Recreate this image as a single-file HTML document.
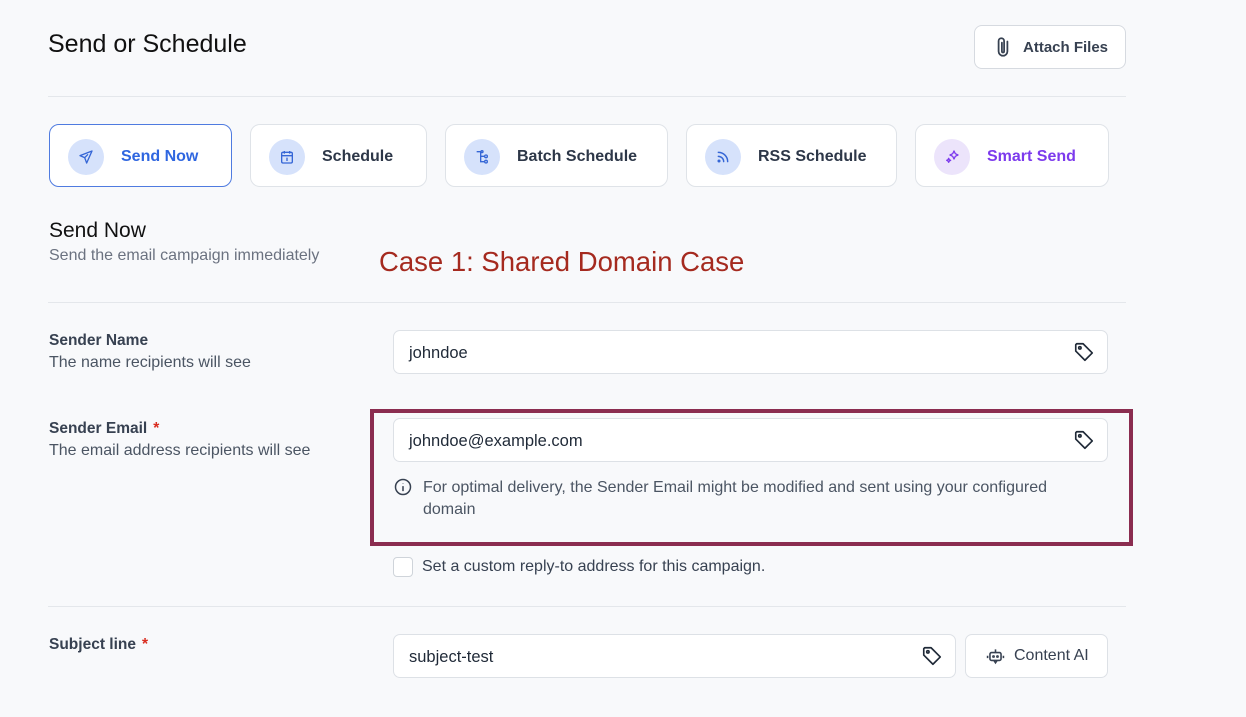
<!DOCTYPE html>
<html><head><meta charset="utf-8"><style>
*{box-sizing:border-box;margin:0;padding:0}
body{width:1246px;height:717px;background:#f8f9fb;font-family:"Liberation Sans",sans-serif;color:#1f2937;position:relative;overflow:hidden}
.a{position:absolute}
.card{position:absolute;top:124px;height:63px;background:#fff;border:1px solid #dfe3e8;border-radius:10px;display:flex;align-items:center;font-size:16px;font-weight:bold;color:#2d3748;padding-top:2px}
.ic{width:36px;height:36px;border-radius:50%;background:#d6e2fb;margin-left:18px;margin-right:17px;display:flex;align-items:center;justify-content:center}
.hr{position:absolute;left:48px;width:1078px;height:1px;background:#e4e7eb}
.inp{position:absolute;left:393px;width:715px;height:44px;background:#fff;border:1px solid #dde1e6;border-radius:7px;font-size:16.5px;color:#1f2937;padding:2px 0 0 15px;display:flex;align-items:center}
.tag{position:absolute;right:12px;top:10px}
.lbl{position:absolute;left:49px;font-size:15.5px;font-weight:bold;color:#374151}
.sub{position:absolute;left:49px;font-size:16px;color:#4b5563}
.req{color:#d92d20;margin-left:6px}
</style></head><body>
<div class="a" style="left:48px;top:30px;font-size:25px;color:#111">Send or Schedule</div>
<div class="a" style="left:974px;top:25px;width:152px;height:44px;background:#fff;border:1px solid #d6dae0;border-radius:8px;display:flex;align-items:center;font-size:15px;font-weight:bold;color:#374151">
<svg style="margin:0 11px 0 19px" width="18" height="22" viewBox="0 0 16 20" fill="none" stroke="#374151" stroke-width="1.6" stroke-linecap="round"><path d="M12 5v9a4 4 0 0 1-8 0V4.5a2.5 2.5 0 0 1 5 0V14a1 1 0 0 1-2 0V6"/></svg>Attach Files</div>
<div class="hr" style="top:96px"></div>

<div class="card" style="left:49px;width:183px;border:1.5px solid #4f7be0;color:#2f66e0"><div class="ic"><svg width="16" height="16" viewBox="0 0 24 24" fill="none" stroke="#3566d6" stroke-width="2" stroke-linejoin="round"><path d="M21 3 3 10l7 3 3 8z"/><path d="M10 13l5-5"/></svg></div>Send Now</div>
<div class="card" style="left:250px;width:177px"><div class="ic"><svg width="16" height="16" viewBox="0 0 24 24" fill="none" stroke="#3566d6" stroke-width="2"><rect x="4" y="5" width="16" height="16" rx="2"/><path d="M4 10h16M8 3v4M16 3v4M12 13v5"/></svg></div>Schedule</div>
<div class="card" style="left:445px;width:223px"><div class="ic"><svg width="16" height="16" viewBox="0 0 24 24" fill="none" stroke="#3566d6" stroke-width="2"><path d="M4 4h6M10 4v16M10 11h6M10 19h6"/><circle cx="18" cy="11" r="2"/><circle cx="18" cy="19" r="2"/><circle cx="12" cy="4" r="1.5"/></svg></div>Batch Schedule</div>
<div class="card" style="left:686px;width:211px"><div class="ic"><svg width="16" height="16" viewBox="0 0 24 24" fill="none" stroke="#3566d6" stroke-width="2.2" stroke-linecap="round"><path d="M5 11a8 8 0 0 1 8 8M5 5a14 14 0 0 1 14 14"/><circle cx="6" cy="18" r="1.2" fill="#3566d6"/></svg></div>RSS Schedule</div>
<div class="card" style="left:915px;width:194px;color:#7c3aed"><div class="ic" style="background:#ece4fb"><svg width="16" height="16" viewBox="0 0 24 24" fill="none" stroke="#7c3aed" stroke-width="2" stroke-linejoin="round"><path d="M15 3l2 4 4 2-4 2-2 4-2-4-4-2 4-2z"/><path d="M7 14l1 2 2 1-2 1-1 2-1-2-2-1 2-1z"/></svg></div>Smart Send</div>

<div class="a" style="left:49px;top:219px;font-size:21px;color:#111">Send Now</div>
<div class="a" style="left:49px;top:247px;font-size:16px;color:#6b7280">Send the email campaign immediately</div>
<div class="a" style="left:379px;top:246px;font-size:27.5px;color:#a52a1f">Case 1: Shared Domain Case</div>
<div class="hr" style="top:302px"></div>

<div class="lbl" style="top:332px">Sender Name</div>
<div class="sub" style="top:354px">The name recipients will see</div>
<div class="inp" style="top:330px">johndoe<svg class="tag" width="22" height="22" viewBox="0 0 24 24" fill="none" stroke="#1f2937" stroke-width="1.8" stroke-linejoin="round"><path d="M3 4v7l10 10 8-8L11 3H4z"/><circle cx="7.5" cy="7.5" r="1.3"/></svg></div>

<div class="lbl" style="top:420px">Sender Email<span class="req">*</span></div>
<div class="sub" style="top:442px">The email address recipients will see</div>
<div class="a" style="left:370px;top:409px;width:763px;height:137px;border:4px solid #8b2d50"></div>
<div class="inp" style="top:418px">johndoe@example.com<svg class="tag" width="22" height="22" viewBox="0 0 24 24" fill="none" stroke="#1f2937" stroke-width="1.8" stroke-linejoin="round"><path d="M3 4v7l10 10 8-8L11 3H4z"/><circle cx="7.5" cy="7.5" r="1.3"/></svg></div>
<svg class="a" style="left:393px;top:477px" width="20" height="20" viewBox="0 0 24 24" fill="none" stroke="#374151" stroke-width="1.8"><circle cx="12" cy="12" r="9"/><path d="M12 11v6M12 7.5v.5"/></svg>
<div class="a" style="left:423px;top:477px;width:668px;font-size:16px;line-height:22px;color:#4b5563">For optimal delivery, the Sender Email might be modified and sent using your configured domain</div>
<div class="a" style="left:393px;top:557px;width:20px;height:20px;border:1px solid #cfd4da;border-radius:4px;background:#fff"></div>
<div class="a" style="left:422px;top:558px;font-size:16px;color:#374151">Set a custom reply-to address for this campaign.</div>
<div class="hr" style="top:606px"></div>

<div class="lbl" style="top:636px">Subject line<span class="req">*</span></div>
<div class="inp" style="top:634px;width:563px">subject-test<svg class="tag" width="22" height="22" viewBox="0 0 24 24" fill="none" stroke="#1f2937" stroke-width="1.8" stroke-linejoin="round"><path d="M3 4v7l10 10 8-8L11 3H4z"/><circle cx="7.5" cy="7.5" r="1.3"/></svg></div>
<div class="a" style="left:965px;top:634px;width:143px;height:44px;background:#fff;border:1px solid #dde1e6;border-radius:7px;display:flex;align-items:center;font-size:16px;color:#374151">
<svg style="margin:0 9px 0 20px" width="19" height="19" viewBox="0 0 24 24" fill="none" stroke="#374151" stroke-width="2"><rect x="5" y="7" width="14" height="10" rx="2"/><path d="M12 3v4M2 11v3M22 11v3M10 17l2 3 2-3"/><circle cx="9.5" cy="12" r=".8"/><circle cx="14.5" cy="12" r=".8"/></svg>Content AI</div>
</body></html>
